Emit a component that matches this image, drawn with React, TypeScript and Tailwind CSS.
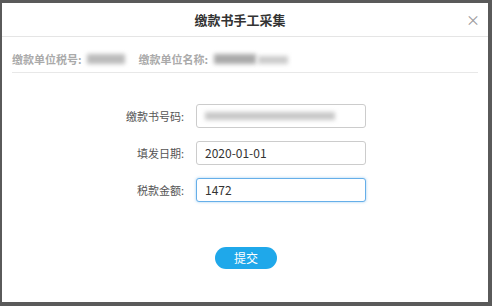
import React from 'react';

const font = { fontFamily: '"Microsoft YaHei", "Noto Sans CJK SC", "Liberation Sans", sans-serif' };

const Field = ({ label, children, focus }: { label: string; children: React.ReactNode; focus?: boolean }) => (
  <div className="flex items-center">
    <div className="w-[182px] text-right text-[11px] text-[#555]">{label}:</div>
    <div
      className={`ml-[12px] w-[170px] h-[24px] rounded-[3px] border bg-white flex items-center px-[8px] text-[12px] text-[#333] ${
        focus ? 'border-[#66afe9] shadow-[0_0_3px_rgba(102,175,233,0.6)]' : 'border-[#ccc]'
      }`}
    >
      {children}
    </div>
  </div>
);

const App = () => {
  return (
    <div className="w-[492px] h-[306px] bg-[#5a5a5a] pt-[3px] pl-[2px] pr-[4px] pb-[4px]" style={font}>
      <div className="w-full h-full bg-white flex flex-col">
        {/* 标题 */}
        <div className="h-[34px] border-b border-[#e5e5e5] flex items-center justify-center relative">
          <span className="text-[13px] font-bold text-[#333] mr-[10px]">缴款书手工采集</span>
          <span className="absolute right-[8px] top-[6px] text-[14px] text-[#999]">×</span>
        </div>

        {/* 单位信息 */}
        <div className="mx-[10px] h-[36px] pb-[5px] border-b border-[#e8e8e8] flex items-end text-[11px] text-[#aaa] font-bold">
          <span>缴款单位税号:</span>
          <span className="ml-[5px] mb-[3px] w-[38px] h-[10px] bg-[#bbb] blur-[2px]"></span>
          <span className="ml-[14px]">缴款单位名称:</span>
          <span className="ml-[6px] mb-[3px] w-[42px] h-[10px] bg-[#aaa] blur-[2px]"></span>
          <span className="ml-[2px] mb-[3px] w-[30px] h-[8px] bg-[#ccc] blur-[2px]"></span>
        </div>

        {/* 表单 */}
        <div className="flex flex-col gap-[13px] pt-[31px]">
          <Field label="缴款书号码">
            <span className="w-[130px] h-[8px] bg-[#c8c8c8] blur-[2px]"></span>
          </Field>
          <Field label="填发日期">2020-01-01</Field>
          <Field label="税款金额" focus>
            1472
          </Field>
        </div>

        <div className="flex justify-center pt-[45px] pl-[2px]">
          <button className="w-[62px] h-[22px] rounded-full bg-[#1fa8ea] text-white text-[12px]">提交</button>
        </div>
      </div>
    </div>
  );
};

export default App;
